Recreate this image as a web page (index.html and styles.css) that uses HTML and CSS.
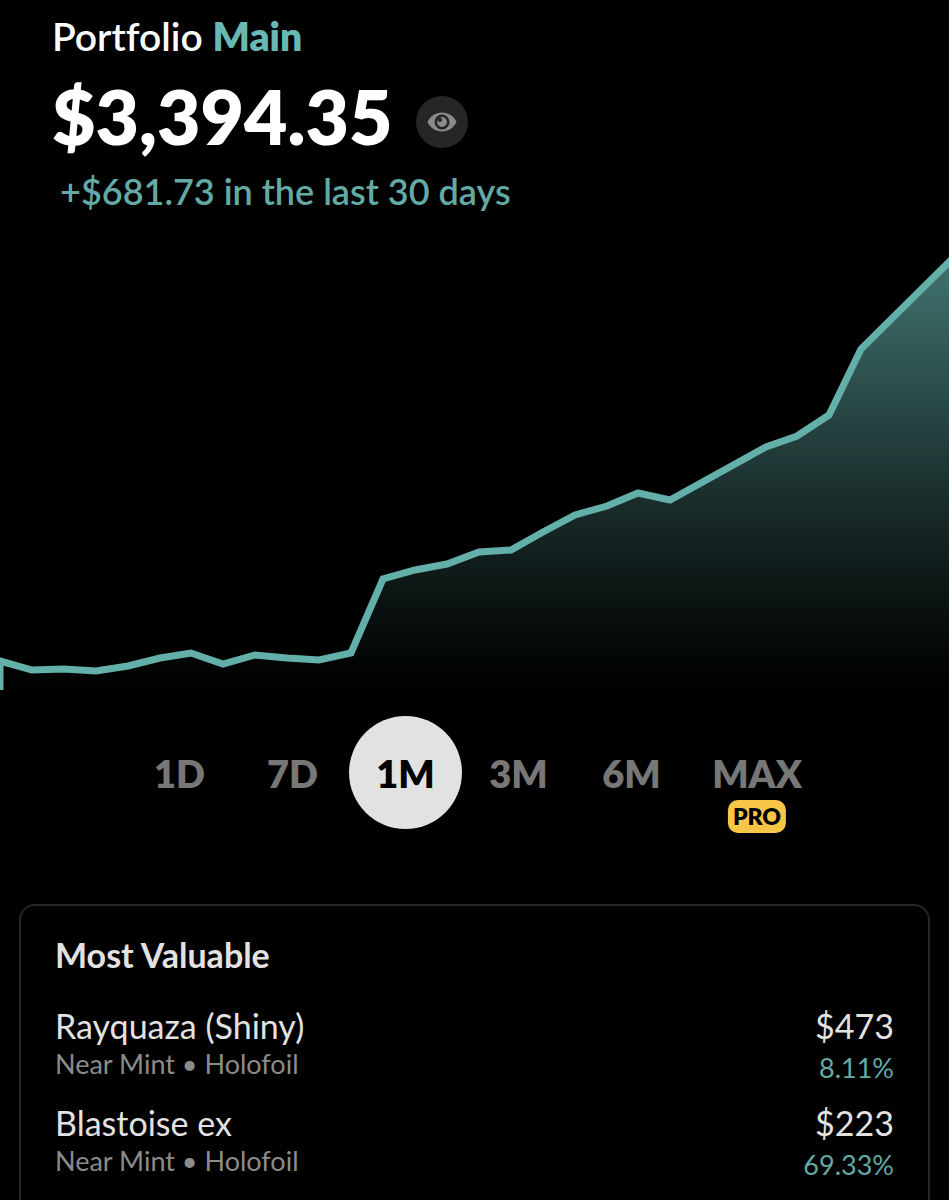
FILE: index.html
```
<!DOCTYPE html>
<html lang="en">
<head>
    <meta charset="UTF-8">
    <meta name="viewport" content="width=device-width, initial-scale=1.0">
    <title>Portfolio</title>
    <link rel="stylesheet" href="styles.css">
</head>
<body>
    <header class="summary">
        <h1 class="title">Portfolio <span class="portfolio-name">Main</span></h1>
        <div class="total">
            <span class="amount">$3,394.35</span>
            <button class="toggle-btn" type="button" aria-label="Hide balance">
                <svg class="eye" viewBox="0 0 30 20">
                    <path fill="#8b8b8b" d="M0.5 10C3.5 4 8.600 0.500 15 0.500S26.500 4 29.500 10C26.500 16 21.400 19.500 15 19.500S3.500 16 0.500 10Z"/>
                    <circle cx="15" cy="10" r="6.200" fill="#8b8b8b" stroke="#262626" stroke-width="2.600"/>
                    <circle cx="12.800" cy="7.800" r="2.200" fill="#262626"/>
                </svg>
            </button>
        </div>
        <p class="change">+$681.73 in the last 30 days</p>
    </header>

    <svg class="chart" viewBox="0 0 949 450" role="img" aria-label="Portfolio value over the last month">
        <defs>
            <linearGradient id="fill" gradientUnits="userSpaceOnUse" x1="0" y1="20" x2="0" y2="450">
                <stop offset="0" stop-color="#63b0aa" stop-opacity="0.65"/>
                <stop offset="0.550" stop-color="#63b0aa" stop-opacity="0.26"/>
                <stop offset="0.820" stop-color="#63b0aa" stop-opacity="0.09"/>
                <stop offset="1" stop-color="#63b0aa" stop-opacity="0"/>
            </linearGradient>
        </defs>
        <path fill="url(#fill)" d="M0 450V421L32 430L64 429L96 431L128 426L160 418L191 413L223 424L255 415L287 418L319 420L351 413L383 339L415 330L447 324L479 312L511 310L543 292L575 275L607 266L638 253L670 260L766 207L797 196L829 175L861 109L949 22V450Z"/>
        <path class="line" d="M0 451V421L32 430L64 429L96 431L128 426L160 418L191 413L223 424L255 415L287 418L319 420L351 413L383 339L415 330L447 324L479 312L511 310L543 292L575 275L607 266L638 253L670 260L766 207L797 196L829 175L861 109L949 22L960 11"/>
    </svg>

    <nav class="ranges">
        <button class="range" type="button">1D</button>
        <button class="range" type="button">7D</button>
        <button class="range active" type="button">1M</button>
        <button class="range" type="button">3M</button>
        <button class="range" type="button">6M</button>
        <button class="range range-max" type="button">MAX<span class="pro">PRO</span></button>
    </nav>

    <section class="card">
        <h2 class="card-title">Most Valuable</h2>
        <div class="item">
            <div class="info">
                <div class="name">Rayquaza (Shiny)</div>
                <div class="detail">Near Mint • Holofoil</div>
            </div>
            <div class="value">
                <div class="price">$473</div>
                <div class="percent">8.11%</div>
            </div>
        </div>
        <div class="item">
            <div class="info">
                <div class="name">Blastoise ex</div>
                <div class="detail">Near Mint • Holofoil</div>
            </div>
            <div class="value">
                <div class="price">$223</div>
                <div class="percent">69.33%</div>
            </div>
        </div>
    </section>
</body>
</html>
```
FILE: styles.css
```
* {
    box-sizing: border-box;
}

body {
    margin: 0;
    background-color: #000;
    color: #e2e2e2;
    font-family: Lato, sans-serif;
}

button {
    border: none;
    padding: 0;
    font-family: inherit;
    cursor: pointer;
}

.summary {
    padding: 12px 52px 0;
}

.title {
    margin: 0;
    font-size: 39px;
    line-height: 48px;
    font-weight: 600;
    font-variant-ligatures: none;
    color: #fff;
}

.portfolio-name {
    font-weight: 800;
    color: #68b9b3;
}

.total {
    display: flex;
    align-items: center;
    gap: 24px;
    height: 112px;
}

.amount {
    font-size: 75px;
    font-weight: 800;
    color: #fff;
}

.toggle-btn {
    display: flex;
    align-items: center;
    justify-content: center;
    width: 52px;
    height: 52px;
    margin-top: 12px;
    border-radius: 50%;
    background-color: #262626;
}

.eye {
    width: 30px;
    height: 20px;
}

.change {
    margin: 0;
    padding-left: 8px;
    font-size: 36px;
    line-height: 38px;
    font-weight: 600;
    color: #63aaa4;
}

.chart {
    display: block;
    width: 100%;
    margin-top: 30px;
}

.line {
    fill: none;
    stroke: #63b0aa;
    stroke-width: 7;
}

.ranges {
    display: flex;
    justify-content: center;
    margin-top: 26px;
}

.range {
    position: relative;
    width: 113px;
    height: 113px;
    border-radius: 50%;
    background: none;
    color: #777;
    font-size: 38px;
    font-weight: 800;
}

.range.active {
    background-color: #e2e2e2;
    color: #000;
}

.range-max {
    width: 138px;
}

.pro {
    position: absolute;
    top: 84px;
    left: 50%;
    transform: translateX(-50%);
    padding: 0 5px;
    border-radius: 10px;
    background-color: #f8c646;
    color: #000;
    font-size: 23px;
    line-height: 33px;
    font-weight: 800;
}

.card {
    margin: 75px 19px 0;
    padding: 29px 34px 40px;
    border: 2px solid #262626;
    border-bottom: none;
    border-radius: 16px 16px 0 0;
}

.card-title {
    margin: 0 0 28px;
    font-size: 34px;
    line-height: 40px;
    font-weight: 700;
}

.item {
    display: flex;
    justify-content: space-between;
    height: 97px;
}

.name,
.price {
    font-size: 34px;
    line-height: 46px;
}

.detail,
.percent {
    font-size: 27px;
    line-height: 30px;
}

.detail {
    color: #8b8b8b;
}

.value {
    text-align: right;
}

.percent {
    margin-top: 4px;
    color: #63aaa4;
}
```
